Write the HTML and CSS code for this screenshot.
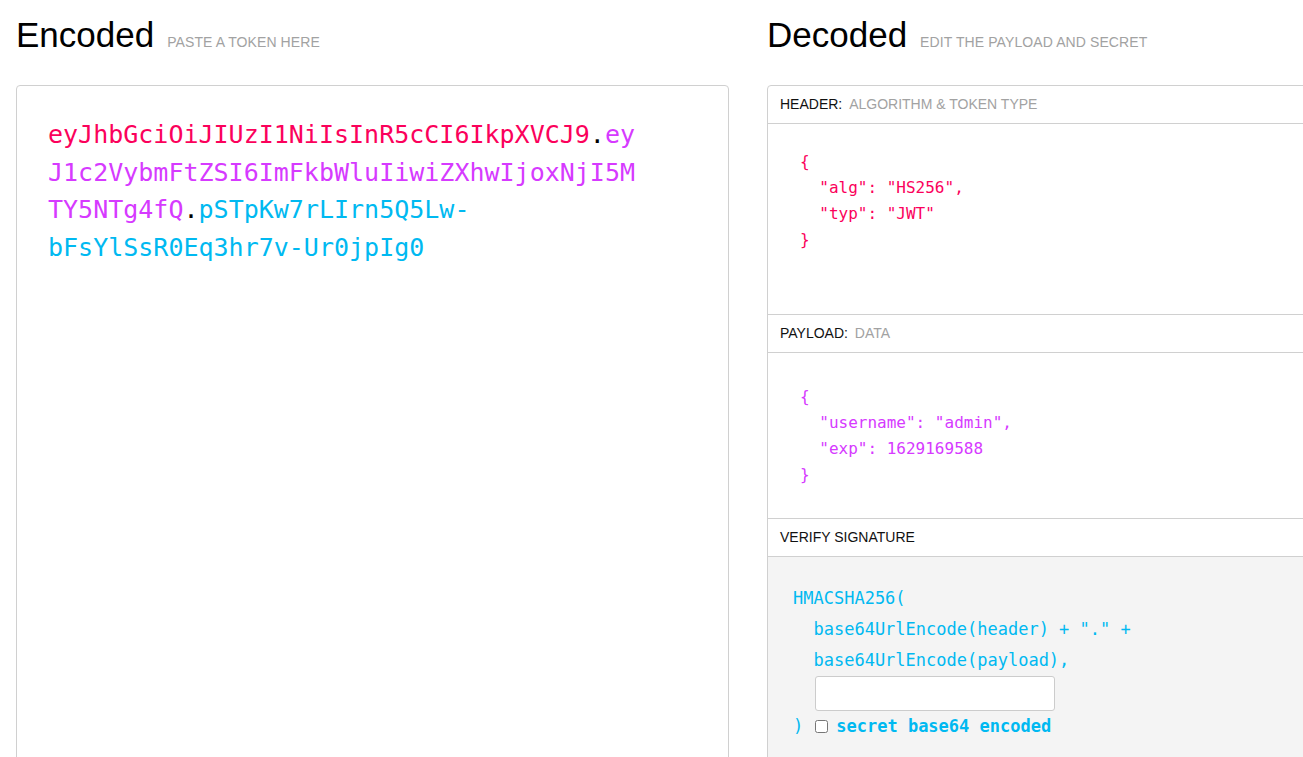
FILE: index.html
```html
<!DOCTYPE html>
<html lang="en">
<head>
    <meta charset="UTF-8">
    <meta name="viewport" content="width=device-width, initial-scale=1.0">
    <title>JWT Debugger</title>
    <link rel="stylesheet" href="styles.css">
</head>
<body>
    <div class="debugger">
        <section class="column">
            <div class="column-title">
                <h2>Encoded</h2>
                <span class="hint">Paste a token here</span>
            </div>
            <div class="panel encoded">
                <div class="token"><span class="jwt-header">eyJhbGciOiJIUzI1NiIsInR5cCI6IkpXVCJ9</span><span class="dot">.</span><span class="jwt-payload">eyJ1c2VybmFtZSI6ImFkbWluIiwiZXhwIjoxNjI5MTY5NTg4fQ</span><span class="dot">.</span><span class="jwt-signature">pSTpKw7rLIrn5Q5Lw-bFsYlSsR0Eq3hr7v-Ur0jpIg0</span></div>
            </div>
        </section>

        <section class="column">
            <div class="column-title">
                <h2>Decoded</h2>
                <span class="hint">Edit the payload and secret</span>
            </div>
            <div class="panel decoded">
                <div class="part-label">Header: <span class="part-sub">Algorithm &amp; Token type</span></div>
                <pre class="json header-json">{
  "alg": "HS256",
  "typ": "JWT"
}</pre>

                <div class="part-label">Payload: <span class="part-sub">Data</span></div>
                <pre class="json payload-json">{
  "username": "admin",
  "exp": 1629169588
}</pre>

                <div class="part-label">Verify signature</div>
                <div class="signature">
<pre class="sig-code">HMACSHA256(
  base64UrlEncode(header) + "." +
  base64UrlEncode(payload),</pre>
                    <input class="secret" type="text">
                    <div class="sig-end">
                        <span>)</span>
                        <input class="base64-check" type="checkbox" id="b64">
                        <label for="b64">secret base64 encoded</label>
                    </div>
                </div>
            </div>
        </section>
    </div>
</body>
</html>
```

FILE: styles.css
```css
html, body {
    margin: 0;
    background: #fff;
    overflow: hidden;
}
body {
    font-family: 'Liberation Sans', Arial, sans-serif;
    color: #000;
}
.debugger {
    display: flex;
    gap: 38px;
    padding: 15px 0 0 16px;
    width: 1470px;
}
.column {
    width: 713px;
    flex-shrink: 0;
}
.column-title {
    display: flex;
    align-items: baseline;
    height: 40px;
    margin-bottom: 30px;
}
.column-title h2 {
    margin: 0;
    font-size: 35px;
    font-weight: normal;
    line-height: 40px;
}
.hint {
    margin-left: 13px;
    font-size: 14px;
    letter-spacing: 0.1px;
    text-transform: uppercase;
    color: #a2a2a2;
}
.panel {
    border: 1px solid #d0d0d0;
    border-radius: 4px;
    height: 700px;
    box-sizing: border-box;
    overflow: hidden;
}
.encoded {
    padding: 30px 0 0 31px;
}
.token {
    width: 595px;
    font-family: 'DejaVu Sans Mono', 'Liberation Mono', monospace;
    font-size: 25px;
    line-height: 37.5px;
    overflow-wrap: break-word;
}
.jwt-header { color: #fb015b; }
.jwt-payload { color: #d63aff; }
.jwt-signature { color: #00b9f1; }
.dot { color: #000; }

.part-label {
    padding: 10px 12px;
    font-size: 14px;
    line-height: 17px;
    text-transform: uppercase;
    color: #111;
    border-bottom: 1px solid #d0d0d0;
}
.part-sub {
    color: #a2a2a2;
    margin-left: 3px;
}
.json {
    margin: 0;
    padding: 25px 0 0 32px;
    font-family: 'DejaVu Sans Mono', 'Liberation Mono', monospace;
    font-size: 16px;
    line-height: 26px;
    border-bottom: 1px solid #d0d0d0;
    box-sizing: border-box;
}
.header-json {
    color: #fb015b;
    height: 191px;
}
.payload-json {
    color: #d63aff;
    height: 166px;
    padding-top: 31px;
}
.signature {
    background: #f4f4f4;
    padding: 26px 0 30px 25px;
    color: #00b9f1;
    font-family: 'DejaVu Sans Mono', 'Liberation Mono', monospace;
    font-size: 17px;
    line-height: 31px;
    height: 100%;
}
.sig-code {
    margin: 0;
    font: inherit;
}
.secret {
    display: block;
    margin: 0 0 0 22px;
    width: 240px;
    height: 35px;
    box-sizing: border-box;
    border: 1px solid #ccc;
    border-radius: 3px;
    background: #fff;
}
.sig-end {
    display: flex;
    align-items: center;
    height: 31px;
}
.base64-check {
    width: 13px;
    height: 13px;
    margin: 0 8px 0 12px;
}
.sig-end label {
    font-weight: bold;
}
```
